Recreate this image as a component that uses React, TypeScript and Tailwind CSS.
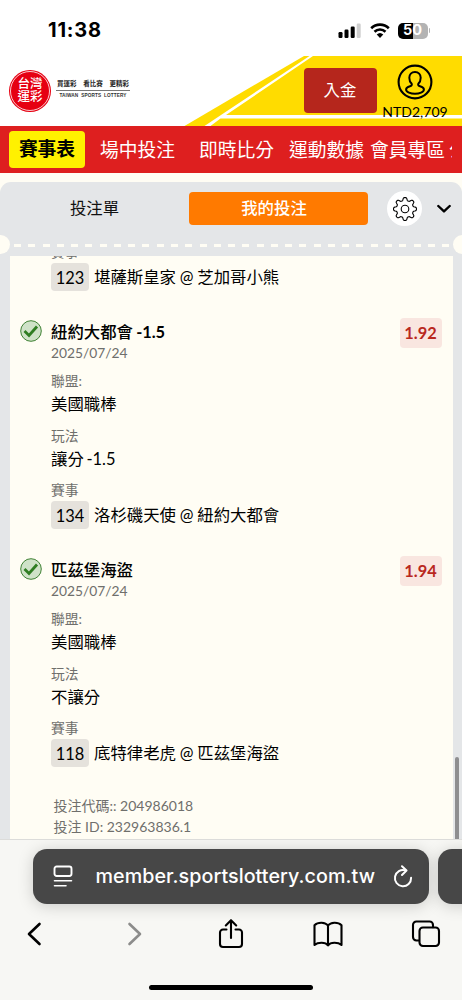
import type { ReactNode } from 'react';

const stroke = {
  fill: 'none',
  stroke: 'currentColor',
  strokeLinecap: 'round' as const,
  strokeLinejoin: 'round' as const,
};

function StatusBar() {
  return (
    <div className="flex h-[56px] items-start justify-between bg-white pt-[18px] pr-[32px] pl-[48px] font-['Inter',sans-serif]">
      <span className="text-[20px] leading-[25px] font-bold tracking-[0.8px] text-black">11:38</span>
      <div className="flex items-center pt-[4px]">
        <svg width="24" height="17" viewBox="0 0 24 17">
          <rect x="0.5" y="10" width="4" height="6" rx="1.2" />
          <rect x="6.5" y="7.5" width="4" height="8.5" rx="1.2" />
          <rect x="12.7" y="4.5" width="4" height="11.5" rx="1.2" />
          <rect x="18.7" y="1.5" width="4" height="14.5" rx="1.2" fill="#cfcfcf" />
        </svg>
        <svg className="ml-[8px]" width="20" height="17" viewBox="0 0 20 17">
          <path d="M1.2 6.2a12.6 12.6 0 0 1 17.6 0" fill="none" stroke="#000" strokeWidth="2.6" />
          <path d="M4.5 9.7a7.9 7.9 0 0 1 11 0" fill="none" stroke="#000" strokeWidth="2.6" />
          <path d="M10 16l-3.300-3.500a4.800 4.800 0 0 1 6.600 0z" />
        </svg>
        <div className="ml-[8px] flex h-[16px] w-[30px] items-center justify-center rounded-[5px] bg-[linear-gradient(90deg,#000_50%,#b3b3b3_50%)] text-[14.5px] leading-none font-bold text-white">
          50
        </div>
        <div className="ml-[1px] h-[5px] w-[1.5px] rounded-r-full bg-[#b3b3b3]" />
      </div>
    </div>
  );
}

function Header() {
  return (
    <header className="relative h-[69.500px] bg-white">
      <svg className="absolute inset-0" width="462" height="70" viewBox="0 0 462 70">
        <path d="M304 0H462V70H184.500z" fill="#ffdc00" />
        <path d="M309.500 0H313L226 59H462V62.500H220.500L210.500 70H204.500L230 53z" fill="#fff" />
      </svg>
      <div className="relative flex h-full items-start">
        <div className="mt-[13.500px] ml-[9px] flex h-[42px] w-[42px] items-center justify-center rounded-full bg-[#e60012] p-[1px]">
          <div className="flex h-full w-full flex-col items-center justify-center rounded-full border-[0.5px] border-white/80 text-[12.5px] leading-[12.500px] font-medium text-white">
            <span>台灣</span>
            <span>運彩</span>
          </div>
        </div>
        <div className="mt-[24px] ml-[5px] w-[74px]">
          <div className="flex h-[10.500px] items-center justify-between border-b-[0.7px] border-[#777] pr-[1px] pb-[1px] pl-[1px] text-[6.5px] leading-none font-bold text-[#222]">
            <span>買運彩</span>
            <span>看比賽</span>
            <span>更精彩</span>
          </div>
          <div className="mt-[2px] text-center font-['Liberation_Sans',sans-serif] text-[4.7px] leading-[6px] font-bold tracking-[0.12px] whitespace-nowrap text-[#333]">
            TAIWAN&nbsp; SPORTS&nbsp; LOTTERY
          </div>
        </div>
        <button className="mt-[12px] ml-[173.500px] h-[45px] w-[73px] rounded-[4px] bg-[#b5261c] text-[16.4px] text-white">入金</button>
        <div className="ml-[4.500px] flex w-[68px] flex-col items-center text-black">
          <svg className="mt-[7.500px]" width="36" height="36" viewBox="0 0 36 36" {...stroke} strokeWidth="2">
            <circle cx="18" cy="18" r="16.400" strokeWidth="2.1" />
            <path d="M18 8c-3.500 0-5.700 2.500-5.700 5.700 0 2.400.800 4.600 2.400 6.100.500 1.300-.300 2.100-1.700 2.500-2.200.600-3.900 1.400-3.900 3.200 0 2.600 4.600 4.300 8.900 4.300s8.900-1.700 8.900-4.300c0-1.800-1.700-2.600-3.900-3.200-1.400-.400-2.200-1.200-1.700-2.500 1.600-1.500 2.400-3.700 2.400-6.100C23.700 10.500 21.500 8 18 8z" />
          </svg>
          <span className="mt-[3.500px] text-[14px] leading-[17px] whitespace-nowrap">NTD2,709</span>
        </div>
      </div>
    </header>
  );
}

function Nav() {
  return (
    <nav className="flex h-[47.500px] items-center bg-[#de1f1f] text-[18.75px] leading-[28px] whitespace-nowrap text-white">
      <span className="ml-[9px] flex h-[37px] w-[76px] shrink-0 items-center justify-center rounded-[4px] bg-[#fff100] font-bold text-black">賽事表</span>
      <span className="ml-[15px] pt-[1px]">場中投注</span>
      <span className="ml-[24px] pt-[1px]">即時比分</span>
      <span className="ml-[15px] pt-[1px]">運動數據</span>
      <span className="ml-[6px] pt-[1px]">會員專區</span>
      <span className="ml-[4px] w-[3px] overflow-hidden pt-[1px]">公</span>
    </nav>
  );
}

function GearIcon() {
  const n = 64;
  const points = Array.from({ length: n * 2 }, (_, i) => {
    const a = (i / (n * 2)) * Math.PI * 2;
    const r = 10 + 1.5 * Math.tanh(2 * Math.cos(a * 8));
    return `${(13 + r * Math.sin(a)).toFixed(2)},${(13 - r * Math.cos(a)).toFixed(2)}`;
  }).join(' ');
  return (
    <svg width="26" height="26" viewBox="0 0 26 26" {...stroke} strokeWidth="1.1">
      <polygon points={points} />
      <circle cx="13" cy="13" r="3.800" />
    </svg>
  );
}

function PanelTop() {
  return (
    <div className="shrink-0 bg-[#fffdf4] pt-[9px]">
      <div className="relative h-[74px] overflow-hidden rounded-t-[11px] bg-[#e4e6e8]">
        <div className="flex h-[53px] items-center">
          <div className="w-[189px] text-center text-[16.4px] text-[#111]">投注單</div>
          <div className="flex h-[33px] w-[179px] items-center justify-center rounded-[4px] bg-[#ff7a00] pr-[9px] text-[16.4px] font-medium text-white">我的投注</div>
          <div className="ml-[19px] flex h-[35px] w-[35px] items-center justify-center rounded-full bg-white text-black">
            <GearIcon />
          </div>
          <svg className="ml-[14.500px]" width="14" height="10" viewBox="0 0 14 10" {...stroke} strokeWidth="2.4">
            <path d="M1.300 2L7 7.400 12.700 2" />
          </svg>
        </div>
        <div className="mt-[9px] ml-[14px] h-[2.500px] w-[435px] bg-[repeating-linear-gradient(90deg,#fffdf4_0_7px,transparent_7px_14.270px)]" />
        <div className="absolute top-[52.500px] left-[-9.500px] h-[19px] w-[19px] rounded-full bg-[#fffdf4]" />
        <div className="absolute top-[52.500px] right-[-9.500px] h-[19px] w-[19px] rounded-full bg-[#fffdf4]" />
      </div>
    </div>
  );
}

function Label({ children }: { children: ReactNode }) {
  return <div className="h-[20px] text-[13.8px] leading-[18px] text-[#6f6f6c]">{children}</div>;
}

function Match({ id, home, away }: { id: string; home: string; away: string }) {
  return (
    <div className="flex h-[28px] items-center text-[16.4px] leading-[26px] text-black">
      <span className="mr-[5px] flex h-full w-[38px] items-center justify-center rounded-[4px] bg-[#e5e2dc] pt-[1px]">{id}</span>
      <span className="[word-spacing:-0.400px]">
        {away} @ {home}
      </span>
    </div>
  );
}

type Bet = { team: string; line?: string; odds: string; play: string; id: string; away: string; home: string };

const bets: Bet[] = [
  { team: '紐約大都會', line: '-1.5', odds: '1.92', play: '讓分 -1.5', id: '134', away: '洛杉磯天使', home: '紐約大都會' },
  { team: '匹茲堡海盜', odds: '1.94', play: '不讓分', id: '118', away: '底特律老虎', home: '匹茲堡海盜' },
];

function BetItem({ bet }: { bet: Bet }) {
  return (
    <div className="flex h-[238px] pr-[11px] pl-[10px]">
      <svg className="mt-[1px] mr-[9.500px] shrink-0" width="22" height="22" viewBox="0 0 22 22">
        <circle cx="11" cy="11" r="10.300" fill="#cfe2c8" stroke="#408235" strokeWidth="1" />
        <path d="M4.500 11l4.500 4.500 8-9" fill="none" stroke="#2f7d22" strokeWidth="2.800" />
      </svg>
      <div className="flex-1">
        <div className="h-[26px] text-[16.4px] leading-[25px] font-medium text-black [word-spacing:-0.800px]">
          {bet.team} {bet.line && <span className="font-bold tracking-[-0.1px]">{bet.line}</span>}
        </div>
        <div className="h-[17px] text-[13.8px] leading-[15px] text-[#6f6f6c]">2025/07/24</div>
        <div className="mt-[10px]"><Label>聯盟:</Label></div>
        <div className="h-[26px] text-[16.4px] leading-[24px] text-black">美國職棒</div>
        <div className="mt-[9px]"><Label>玩法</Label></div>
        <div className="h-[26px] text-[16.4px] leading-[23px] text-black [word-spacing:-1.500px]">{bet.play}</div>
        <div className="mt-[8px]"><Label>賽事</Label></div>
        <Match id={bet.id} away={bet.away} home={bet.home} />
      </div>
      <div className="-mt-[1px] flex h-[30px] w-[42px] items-center justify-center rounded-[4px] bg-[#f9e6e0] text-[16.4px] font-bold text-[#b9281e]">{bet.odds}</div>
    </div>
  );
}

function BetList() {
  return (
    <div className="flex h-[583px] shrink-0 overflow-hidden bg-[#e4e6e8] pl-[9.500px]">
      <div className="h-full w-[443px] shrink-0 overflow-hidden bg-[#fffdf4]">
        <div className="-mt-[13px] mb-[28px] pl-[41.500px]">
          <Label>賽事</Label>
          <Match id="123" away="堪薩斯皇家" home="芝加哥小熊" />
        </div>
        {bets.map((b) => (
          <BetItem key={b.id} bet={b} />
        ))}
        <div className="pl-[44px] text-[14px] leading-[21px] text-[#6f6f6c]">
          <div>投注代碼:: 204986018</div>
          <div>投注 ID: 232963836.1</div>
        </div>
      </div>
      <div className="mt-[501px] ml-[2px] h-[90px] w-[4px] shrink-0 rounded-full bg-[#8e8e90]" />
    </div>
  );
}

function BrowserBar() {
  return (
    <footer className="h-[161px] overflow-hidden border-t border-[#dcdcda] bg-[#f7f7f4] pt-[9px] text-black">
      <div className="ml-[33px] flex h-[55px] w-[500px] gap-[9px]">
        <div className="flex h-[55px] w-[396px] shrink-0 items-center rounded-[14px] bg-[#474747] text-white shadow-[0_2px_16px_rgba(0,0,0,0.18)]">
          <svg className="ml-[20px]" width="20" height="23" viewBox="0 0 20 23" {...stroke} strokeWidth="1.900">
            <rect x="1.500" y="1.500" width="17" height="9.500" rx="2.200" />
            <path d="M1.500 15.800h17M1.500 20.800h11.500" strokeWidth="1.600" />
          </svg>
          <span className="ml-[22.500px] w-[280px] pt-[1px] font-['Inter',sans-serif] text-[19.7px] font-medium tracking-[0.06px] whitespace-nowrap">member.sportslottery.com.tw</span>
          <svg className="ml-[17px]" width="20" height="23" viewBox="0 0 20 23" {...stroke} strokeWidth="2">
            <path d="M12.500 5.400A8.100 8.100 0 1 0 18.100 12.800" />
            <path d="M9 1.200l4.500 4.300-4.500 4.500" />
          </svg>
        </div>
        <div className="h-[55px] w-[60px] shrink-0 rounded-[14px] bg-[#474747] shadow-[0_2px_16px_rgba(0,0,0,0.18)]" />
      </div>
      <div className="mt-[13.500px] flex h-[32px] items-center">
        <svg className="ml-[26px]" width="16" height="24" viewBox="0 0 16 24" {...stroke} strokeWidth="2.600">
          <path d="M13.500 2L3 12l10.500 10" />
        </svg>
        <svg className="ml-[85px] text-[#8c8c8b]" width="16" height="24" viewBox="0 0 16 24" {...stroke} strokeWidth="2.600">
          <path d="M2.500 2L13 12 2.500 22" />
        </svg>
        <svg className="ml-[74px]" width="28" height="32" viewBox="0 0 28 32" {...stroke} strokeWidth="2.100">
          <path d="M9.500 11.500H6a3 3 0 0 0-3 3V26a3 3 0 0 0 3 3h16a3 3 0 0 0 3-3V14.500a3 3 0 0 0-3-3h-3.500M14 20V2.500M8.800 7.500L14 2.200l5.200 5.300" />
        </svg>
        <svg className="ml-[67px]" width="32" height="28" viewBox="0 0 32 28" {...stroke} strokeWidth="2.100">
          <path d="M16 5.500C13.500 2 6 1.600 2.500 5.200V25c3.500-3 11-3 13.500.300C18.500 22 26 22 29.500 25V5.200C26 1.600 18.500 2 16 5.500zM16 5.500v19.500" />
        </svg>
        <svg className="ml-[67px]" width="30" height="28" viewBox="0 0 30 28" {...stroke} strokeWidth="2.100">
          <path d="M7.500 20.500H5.400a3.400 3.400 0 0 1-3.400-3.400V4.900a3.400 3.400 0 0 1 3.400-3.400h13.200A3.400 3.400 0 0 1 22 4.900v2.300" />
          <rect x="8.500" y="7.500" width="19.500" height="18.500" rx="3.400" />
        </svg>
      </div>
      <div className="mt-[35px] ml-[149px] h-[5.500px] w-[164px] rounded-full bg-black" />
    </footer>
  );
}

export default function App() {
  return (
    <div className="flex h-[1000px] w-[462px] flex-col overflow-hidden bg-white font-['Lato','Noto_Sans_CJK_TC',sans-serif]">
      <StatusBar />
      <Header />
      <Nav />
      <PanelTop />
      <BetList />
      <BrowserBar />
    </div>
  );
}
